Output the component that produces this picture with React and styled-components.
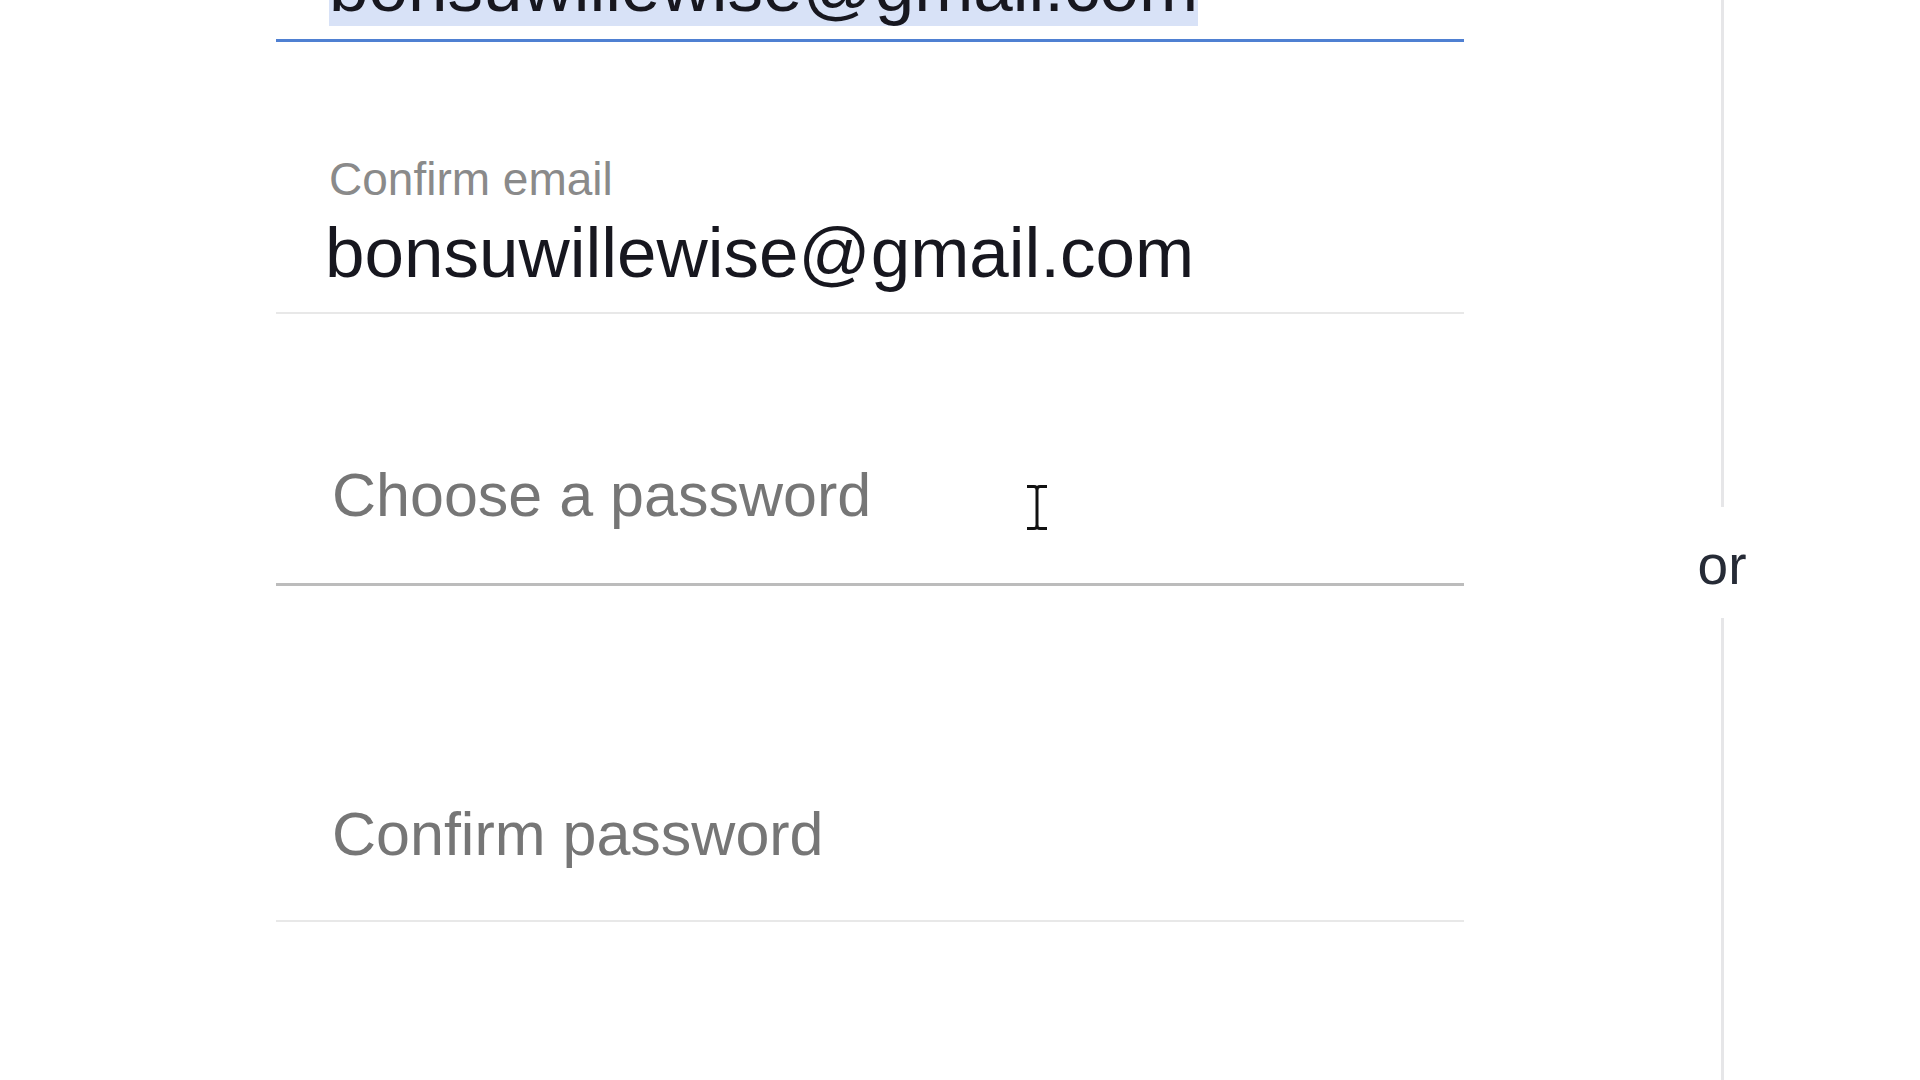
import React from "react";
import styled, { createGlobalStyle } from "styled-components";

const GlobalStyle = createGlobalStyle`
  html, body {
    margin: 0;
    padding: 0;
    background: #fff;
    overflow: hidden;
  }

  body {
    font-family: "Liberation Sans", Arial, sans-serif;
  }
`;

const Page = styled.div`
  position: relative;
  display: flex;
  width: 1920px;
  height: 1080px;
  overflow: hidden;
  background: #fff;
`;

const Form = styled.div`
  display: flex;
  flex-direction: column;
  width: 1188px;
  margin-left: 276px;
  margin-top: -60px;
`;

const Field = styled.div`
  box-sizing: border-box;
  display: flex;
  flex-direction: column;
  justify-content: flex-end;
  align-items: flex-start;
  height: ${(p) => p.$height}px;
  padding: 0 0 ${(p) => p.$padBottom}px 53px;
  border-bottom: ${(p) => p.$line}px solid ${(p) => p.$lineColor};
`;

const Label = styled.div`
  margin-bottom: 8px;
  font-size: 46px;
  line-height: 52px;
  color: #8a8a8a;
`;

const Value = styled.div`
  margin-left: ${(p) => (p.$shift ? "-4px" : "0")};
  font-size: 71px;
  line-height: 80px;
  color: #17171f;
  white-space: nowrap;
`;

const Selected = styled.span`
  background: #d8e2f7;
`;

const Placeholder = styled.div`
  margin-left: 3px;
  font-size: 61px;
  line-height: 70px;
  color: #767676;
  white-space: nowrap;
`;

const Divider = styled.div`
  display: flex;
  flex-direction: column;
  align-items: center;
  width: 100px;
  margin-left: 208px;
`;

const Rule = styled.div`
  width: 3px;
  background: #e6e6e8;
  height: ${(p) => (p.$height ? `${p.$height}px` : "auto")};
  flex: ${(p) => (p.$height ? "none" : "1")};
`;

const Or = styled.div`
  display: flex;
  align-items: center;
  justify-content: center;
  box-sizing: border-box;
  height: 111px;
  padding-top: 6px;
  font-size: 55px;
  line-height: 1;
  color: #262b36;
`;

const Cursor = styled.svg`
  position: absolute;
  left: 1026px;
  top: 484px;
`;

const IBeam = () => (
  <Cursor width="22" height="47" viewBox="0 0 22 47">
    <g fill="none" stroke="#111" strokeWidth="3" strokeLinecap="butt">
      <path d="M1 2.5 H8 Q11 2.5 11 5.5 Q11 2.5 14 2.5 H21" />
      <path d="M11 5 V42" />
      <path d="M1 44.5 H8 Q11 44.5 11 41.5 Q11 44.5 14 44.5 H21" />
    </g>
  </Cursor>
);

export default function App() {
  return (
    <Page>
      <GlobalStyle />
      <Form>
        <Field $height={102} $padBottom={12} $line={3} $lineColor="#4f80d2">
          <Value>
            <Selected>bonsuwillewise@gmail.com</Selected>
          </Value>
        </Field>
        <Field $height={272} $padBottom={19} $line={2} $lineColor="#e8e8e8">
          <Label>Confirm email</Label>
          <Value $shift>bonsuwillewise@gmail.com</Value>
        </Field>
        <Field $height={272} $padBottom={53} $line={3} $lineColor="#bcbcbc">
          <Placeholder>Choose a password</Placeholder>
        </Field>
        <Field $height={336} $padBottom={51} $line={2} $lineColor="#e8e8e8">
          <Placeholder>Confirm password</Placeholder>
        </Field>
      </Form>
      <Divider>
        <Rule $height={507} />
        <Or>or</Or>
        <Rule />
      </Divider>
      <IBeam />
    </Page>
  );
}
